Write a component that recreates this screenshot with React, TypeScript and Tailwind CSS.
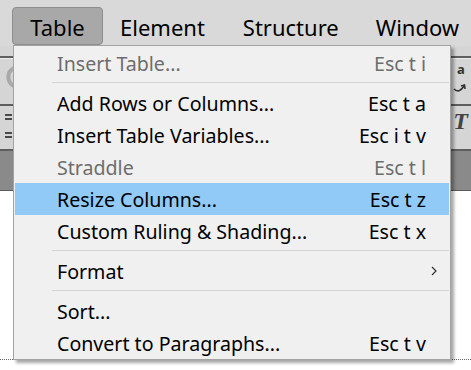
import React from "react";

type Item =
  | { kind: "item"; label: string; shortcut?: string; disabled?: boolean; active?: boolean; submenu?: boolean }
  | { kind: "sep" };

const items: Item[] = [
  { kind: "item", label: "Insert Table...", shortcut: "Esc t i", disabled: true },
  { kind: "sep" },
  { kind: "item", label: "Add Rows or Columns...", shortcut: "Esc t a" },
  { kind: "item", label: "Insert Table Variables...", shortcut: "Esc i t v" },
  { kind: "item", label: "Straddle", shortcut: "Esc t l", disabled: true },
  { kind: "item", label: "Resize Columns...", shortcut: "Esc t z", active: true },
  { kind: "item", label: "Custom Ruling & Shading...", shortcut: "Esc t x" },
  { kind: "sep" },
  { kind: "item", label: "Format", submenu: true },
  { kind: "sep" },
  { kind: "item", label: "Sort..." },
  { kind: "item", label: "Convert to Paragraphs...", shortcut: "Esc t v" },
];

const font = { fontFamily: '"Noto Sans", "Open Sans", sans-serif' };

function Equals() {
  return (
    <div className="flex flex-col gap-[2px] w-[7px]">
      <div className="h-[2px] bg-[#4a4a4a]" />
      <div className="h-[2px] bg-[#4a4a4a]" />
    </div>
  );
}

export default function App() {
  return (
    <div className="relative w-[471px] h-[370px] overflow-hidden bg-white" style={font}>
      {/* Menu bar */}
      <div className="h-[46px] bg-[#d9d9d9] flex items-start text-[22px] text-black">
        <div className="ml-[12px] mt-[7px] w-[91px] h-[38px] rounded-[4px] border border-[#8e8e8e] bg-[#a8a8a8] flex items-center justify-center leading-none">
          <span className="mt-[2px]">Table</span>
        </div>
        <div className="ml-[17px] h-[46px] flex items-center leading-none pt-[7px]">Element</div>
        <div className="ml-[38px] h-[46px] flex items-center leading-none pt-[7px]">Structure</div>
        <div className="ml-[37px] h-[46px] flex items-center leading-none pt-[7px]">Window</div>
      </div>

      {/* Background toolbar (behind menu) */}
      <div className="bg-[#d5d5d5]">
        <div className="h-[10px]" />
        <div className="h-[2px] bg-[#5e5e5e]" />
        <div className="h-[1px] bg-[#ececec]" />
        <div className="h-[45px] flex justify-between items-start">
          <svg width="14" height="24" viewBox="0 0 14 24" className="ml-[3px] mt-[7px]">
            <path d="M11 2 A10 10 0 0 0 11 20" fill="none" stroke="#a9a9a9" strokeWidth="4" />
          </svg>
          <div className="mr-[4px] mt-[2px] relative w-[14px] h-[40px]">
            <span className="absolute left-[4px] top-[2px] text-[13px] text-[#333] leading-none font-bold">a</span>
            <svg width="14" height="14" viewBox="0 0 14 14" className="absolute left-0 top-[20px]">
              <path d="M1 8 Q6 13 11 5" fill="none" stroke="#333" strokeWidth="1.6" />
              <path d="M8 5 L11.5 4 L12 8" fill="none" stroke="#333" strokeWidth="1.6" />
            </svg>
          </div>
        </div>
        <div className="h-[2px] bg-[#5e5e5e]" />
        <div className="h-[43px] flex justify-between items-start">
          <div className="ml-[5px] mt-[8px] flex flex-col gap-[12px]">
            <Equals />
            <Equals />
          </div>
          <span
            className="mr-[3px] mt-[3px] text-[24px] leading-none italic font-bold text-[#444]"
            style={{ fontFamily: '"Liberation Serif", serif' }}
          >
            T
          </span>
        </div>
        <div className="h-[2px] bg-[#5e5e5e]" />
        <div className="h-[39px] bg-[#8a8a8a]" />
        <div className="h-[1px] bg-[#5a5a5a]" />
      </div>
      <div className="h-[168px] bg-white" />
      <div className="border-t border-dotted border-[#666]" />

      {/* Dropdown menu */}
      <div className="absolute left-[13px] top-[45px] w-[438px] bg-[#f0f0f0] border border-[#a3a3a3] pt-[1px] px-[1px] shadow-[3px_3px_3px_rgba(0,0,0,0.35)] text-[19.6px] leading-none">
        {items.map((it, i) =>
          it.kind === "sep" ? (
            <div key={i} className="h-[8px] flex items-start pt-[3px] pl-[37px]">
              <div className="h-px w-full bg-[#d3d3d3]" />
            </div>
          ) : (
            <div
              key={i}
              className={
                "h-[32px] flex items-center justify-between pl-[42px] pr-[23px] " +
                (it.active ? "bg-[#91c9f7] " : "") +
                (it.disabled ? "text-[#6d6d6d]" : "text-black")
              }
            >
              <span className="mt-[2px]">{it.label}</span>
              {it.shortcut ? (
                <span className="mt-[2px]">{it.shortcut}</span>
              ) : it.submenu ? (
                <svg width="8" height="12" viewBox="0 0 8 12" className="-mr-[12px]">
                  <path d="M2 2 L6 6 L2 10" fill="none" stroke="#333" strokeWidth="1.2" />
                </svg>
              ) : null}
            </div>
          )
        )}
      </div>
    </div>
  );
}
